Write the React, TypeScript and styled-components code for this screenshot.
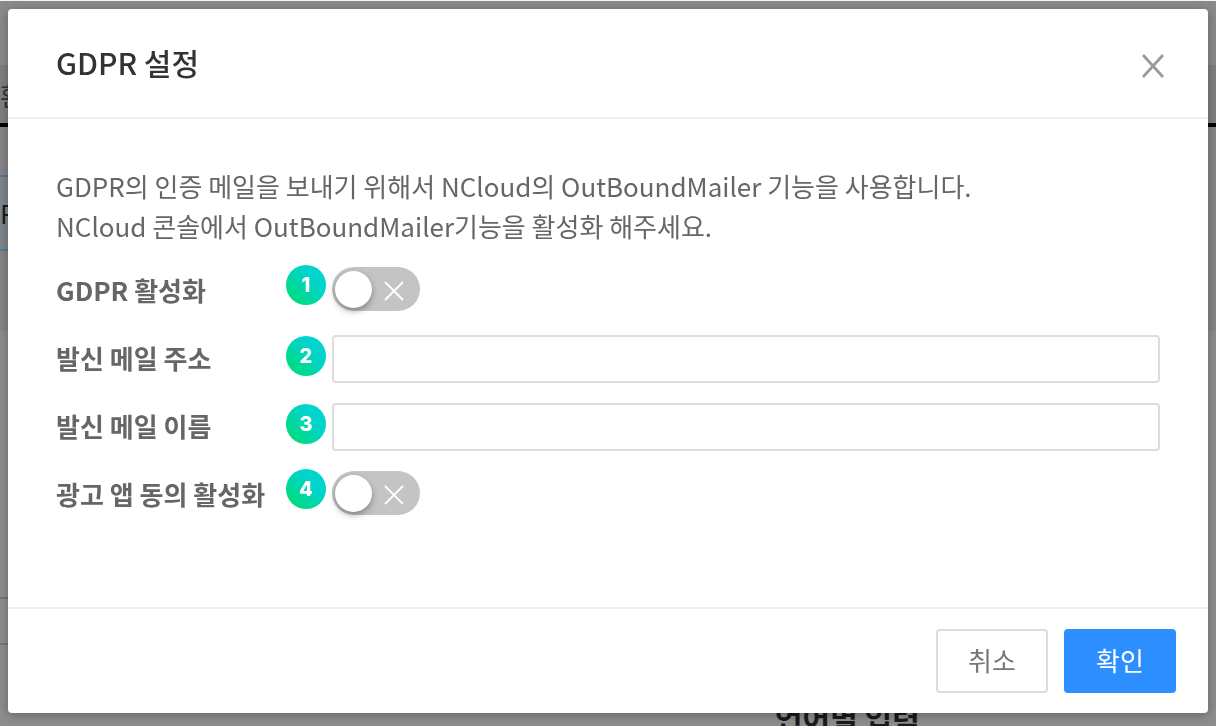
import React from "react";
import styled, { createGlobalStyle } from "styled-components";

const GlobalStyle = createGlobalStyle`
  *, *::before, *::after { box-sizing: border-box; }
  html, body, #root { height: 100%; }
  body {
    margin: 0;
    overflow: hidden;
    color: #666;
    font-family: "Noto Sans CJK KR", "Noto Sans", sans-serif;
    font-size: 26px;
    line-height: 40px;
  }
  button, input { font: inherit; color: inherit; }
`;

const Page = styled.div`
  display: flex;
  flex-direction: column;
  height: 100vh;
  overflow: hidden;
  background: #8e8e8e;
  color: #1a1a1a;
  border-top: 1px solid #f4f4f4;

  > * { flex-shrink: 0; }
`;

const PageTop = styled.div`
  height: 64px;
  background: #898c8a;
`;

const PageTabs = styled.div`
  height: 62px;
  padding-top: 10px;
  background: #808080;
  border-bottom: 4px solid #000;
  color: #333;
`;

const PagePanel = styled.div`
  height: 204px;
  padding-top: 48px;
  background: #868688;
`;

const PageSelected = styled.div`
  width: 100px;
  height: 76px;
  padding-top: 16px;
  border: solid #4a7fa5;
  border-width: 2px 0;
  background: #7f888c;
`;

const PageSpace = styled.div`
  height: 266px;
`;

const PageField = styled.div`
  width: 100px;
  height: 48px;
  border: solid #777;
  border-width: 2px 0;
`;

const PageHeading = styled.h2`
  margin: 50px 0 0;
  padding-left: 775px;
  font-size: 30px;
  line-height: 44px;
  font-weight: 700;
`;

const Overlay = styled.div`
  position: fixed;
  inset: 0;
  padding: 9px 8px 13px;
  display: flex;
`;

const Dialog = styled.section`
  flex: 1;
  display: flex;
  flex-direction: column;
  background: #fff;
  border-radius: 4px;
  box-shadow: 0 2px 12px rgba(0, 0, 0, 0.3);
`;

const Header = styled.header`
  display: flex;
  align-items: center;
  justify-content: space-between;
  padding: 31px 40px 33px 48px;
  border-bottom: 2px solid #f0f0f0;
`;

const Title = styled.h1`
  margin: 0;
  color: #333;
  font-size: 30px;
  line-height: 44px;
  font-weight: 500;
`;

const CloseButton = styled.button`
  display: flex;
  margin-top: 8px;
  padding: 0;
  border: 0;
  background: none;
  color: #999;
  cursor: pointer;
`;

const Body = styled.div`
  flex: 1;
  padding: 47px 48px;
`;

const Description = styled.p`
  margin: 0 0 11px;
`;

const Row = styled.div`
  display: flex;
  align-items: center;
  height: 68px;
`;

const Label = styled.label`
  width: 230px;
  padding-bottom: 2px;
  font-weight: 700;
`;

const Badge = styled.span<{ $raised: boolean }>`
  display: flex;
  align-items: center;
  justify-content: center;
  width: 40px;
  height: 40px;
  margin: 0 6px ${(p) => (p.$raised ? 12 : 6)}px 0;
  border-radius: 50%;
  background: linear-gradient(45deg, #00dc78 10%, #00d4cc 65%);
  color: #fff;
  font: 800 20px/20px Inter, sans-serif;
`;

const TextInput = styled.input`
  flex: 1;
  min-width: 0;
  height: 48px;
  padding: 0 12px;
  border: 2px solid #ddd;
  border-radius: 4px;
  background: #fff;
`;

const Switch = styled.span`
  position: relative;
  display: flex;
  width: 88px;
  height: 44px;
  margin-bottom: 4px;
`;

const SwitchInput = styled.input`
  appearance: none;
  flex: 1;
  display: flex;
  align-items: center;
  margin: 0;
  padding: 3px;
  border-radius: 22px;
  background: #c4c4c4;
  cursor: pointer;

  &::before {
    content: "";
    width: 37px;
    height: 37px;
    border-radius: 50%;
    background: #fff;
    box-shadow: 0 3px 6px rgba(0, 20, 10, 0.35);
  }

  &:checked {
    justify-content: flex-end;
    background: #2d8fff;
  }
`;

const SwitchMark = styled.svg`
  position: absolute;
  top: 14px;
  right: 16px;
  pointer-events: none;
`;

const Footer = styled.footer`
  display: flex;
  justify-content: flex-end;
  gap: 16px;
  padding: 20px 32px;
  border-top: 2px solid #f0f0f0;
`;

const ActionButton = styled.button<{ $primary?: boolean }>`
  width: 112px;
  height: 64px;
  padding: 0 0 2px;
  border: 2px solid ${(p) => (p.$primary ? "#2d8fff" : "#ddd")};
  border-radius: 4px;
  background: ${(p) => (p.$primary ? "#2d8fff" : "#fff")};
  color: ${(p) => (p.$primary ? "#fff" : "#777")};
  cursor: pointer;
`;

type Field = { id: string; label: string; kind: "switch" | "text" };

const fields: Field[] = [
  { id: "gdpr", label: "GDPR 활성화", kind: "switch" },
  { id: "address", label: "발신 메일 주소", kind: "text" },
  { id: "name", label: "발신 메일 이름", kind: "text" },
  { id: "ads", label: "광고 앱 동의 활성화", kind: "switch" },
];

export default function App() {
  return (
    <>
      <GlobalStyle />
      <Page aria-hidden="true">
        <PageTop />
        <PageTabs>환</PageTabs>
        <PagePanel>
          <PageSelected>P</PageSelected>
        </PagePanel>
        <PageSpace />
        <PageField />
        <PageHeading>언어별 입력</PageHeading>
      </Page>
      <Overlay>
        <Dialog role="dialog" aria-modal="true" aria-labelledby="title">
          <Header>
            <Title id="title">GDPR 설정</Title>
            <CloseButton type="button" aria-label="닫기">
              <svg width="30" height="30" viewBox="0 0 30 30" fill="none" stroke="currentColor" strokeWidth="2.7">
                <path d="M5 4 25 26M25 4 5 26" />
              </svg>
            </CloseButton>
          </Header>
          <Body>
            <Description>
              GDPR의 인증 메일을 보내기 위해서 NCloud의 OutBoundMailer 기능을 사용합니다.
              <br />
              NCloud 콘솔에서 OutBoundMailer기능을 활성화 해주세요.
            </Description>
            {fields.map((field, index) => (
              <Row key={field.id}>
                <Label htmlFor={field.id}>{field.label}</Label>
                <Badge $raised={field.kind === "switch"}>{index + 1}</Badge>
                {field.kind === "text" ? (
                  <TextInput id={field.id} type="text" />
                ) : (
                  <Switch>
                    <SwitchInput id={field.id} type="checkbox" role="switch" />
                    <SwitchMark width="20" height="20" viewBox="0 0 20 20" fill="none" stroke="#fff" strokeWidth="1.8">
                      <path d="M1 1 19 19M19 1 1 19" />
                    </SwitchMark>
                  </Switch>
                )}
              </Row>
            ))}
          </Body>
          <Footer>
            <ActionButton type="button">취소</ActionButton>
            <ActionButton type="button" $primary>확인</ActionButton>
          </Footer>
        </Dialog>
      </Overlay>
    </>
  );
}
